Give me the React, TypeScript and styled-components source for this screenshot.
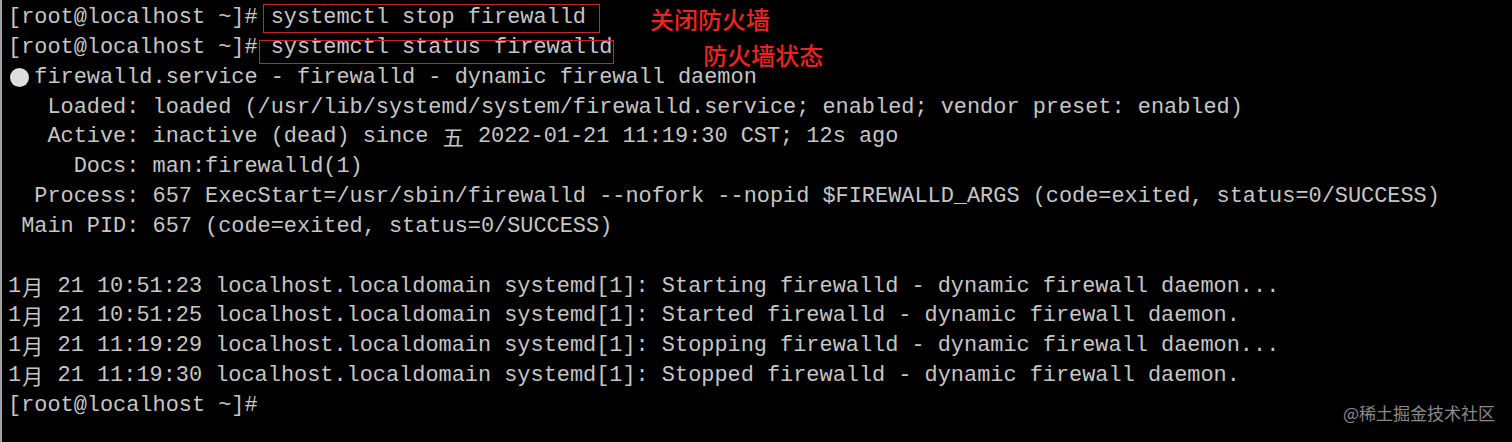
import styled, { createGlobalStyle } from 'styled-components';

const GlobalStyle = createGlobalStyle`
  html, body {
    margin: 0;
    padding: 0;
    background: #000000;
  }
`;

const Wide = ({ children }: { children: string }) => <WideChar>{children}</WideChar>;

export default function App() {
  return (
    <>
      <GlobalStyle />
      <Terminal>
        <Line>
          {'[root@localhost ~]# '}
          <Command $variant="stop">
            systemctl stop firewalld
            <Note $variant="stop">关闭防火墙</Note>
          </Command>
        </Line>
        <Line>
          {'[root@localhost ~]# '}
          <Command $variant="status">
            systemctl status firewalld
            <Note $variant="status">防火墙状态</Note>
          </Command>
        </Line>
        <Line>
          <Bullet>
            <Dot />
          </Bullet>
          firewalld.service - firewalld - dynamic firewall daemon
        </Line>
        <Line>{'   Loaded: loaded (/usr/lib/systemd/system/firewalld.service; enabled; vendor preset: enabled)'}</Line>
        <Line>
          {'   Active: inactive (dead) since '}
          <Wide>五</Wide>
          {' 2022-01-21 11:19:30 CST; 12s ago'}
        </Line>
        <Line>{'     Docs: man:firewalld(1)'}</Line>
        <Line>{'  Process: 657 ExecStart=/usr/sbin/firewalld --nofork --nopid $FIREWALLD_ARGS (code=exited, status=0/SUCCESS)'}</Line>
        <Line>{' Main PID: 657 (code=exited, status=0/SUCCESS)'}</Line>
        <Line />
        <Line>
          1<Wide>月</Wide>
          {' 21 10:51:23 localhost.localdomain systemd[1]: Starting firewalld - dynamic firewall daemon...'}
        </Line>
        <Line>
          1<Wide>月</Wide>
          {' 21 10:51:25 localhost.localdomain systemd[1]: Started firewalld - dynamic firewall daemon.'}
        </Line>
        <Line>
          1<Wide>月</Wide>
          {' 21 11:19:29 localhost.localdomain systemd[1]: Stopping firewalld - dynamic firewall daemon...'}
        </Line>
        <Line>
          1<Wide>月</Wide>
          {' 21 11:19:30 localhost.localdomain systemd[1]: Stopped firewalld - dynamic firewall daemon.'}
        </Line>
        <Line>{'[root@localhost ~]#'}</Line>
        <Watermark>@稀土掘金技术社区</Watermark>
      </Terminal>
    </>
  );
}

const Terminal = styled.div`
  position: relative;
  box-sizing: border-box;
  width: 1512px;
  height: 442px;
  padding: 3px 0 0 6px;
  background-color: #000000;
  border-left: 2px solid #a3a3a3;
  font-family: 'Liberation Mono', 'Noto Sans CJK SC', monospace;
  font-size: 21.9px;
  color: #c6c6c6;
  overflow: hidden;
`;

const Line = styled.div`
  height: 29.85px;
  line-height: 29.85px;
  white-space: pre;
`;

const WideChar = styled.span`
  display: inline-block;
  width: 2ch;
  text-align: center;
  font-family: 'Noto Sans CJK SC', sans-serif;
  font-size: 21px;
  vertical-align: top;
`;

const Bullet = styled.span`
  display: inline-flex;
  width: 2ch;
  height: 29.85px;
  align-items: center;
  vertical-align: top;
`;

const Dot = styled.span`
  width: 19px;
  height: 19px;
  margin-left: 2px;
  border-radius: 50%;
  background-color: #dedede;
`;

const Command = styled.span<{ $variant: 'stop' | 'status' }>`
  position: relative;

  &::after {
    content: '';
    position: absolute;
    pointer-events: none;
    border: 1px solid #c4262c;
    ${({ $variant }) =>
      $variant === 'stop'
        ? 'left: -8px; right: -14px; top: -1px; bottom: -3px;'
        : 'left: -12px; right: -2px; top: 5px; bottom: -4px;'}
  }
`;

const Note = styled.span<{ $variant: 'stop' | 'status' }>`
  position: absolute;
  white-space: nowrap;
  font-family: 'Noto Sans CJK SC', sans-serif;
  font-size: 24px;
  line-height: 24px;
  font-weight: 500;
  color: #ea2420;
  ${({ $variant }) =>
    $variant === 'stop'
      ? 'left: calc(100% + 64px); top: 2px;'
      : 'left: calc(100% + 91px); top: 8px;'}
`;

const Watermark = styled.span`
  position: absolute;
  right: 17px;
  bottom: 19px;
  font-family: 'Noto Sans CJK SC', sans-serif;
  font-size: 17px;
  line-height: 20px;
  color: #8a8a8a;
`;
